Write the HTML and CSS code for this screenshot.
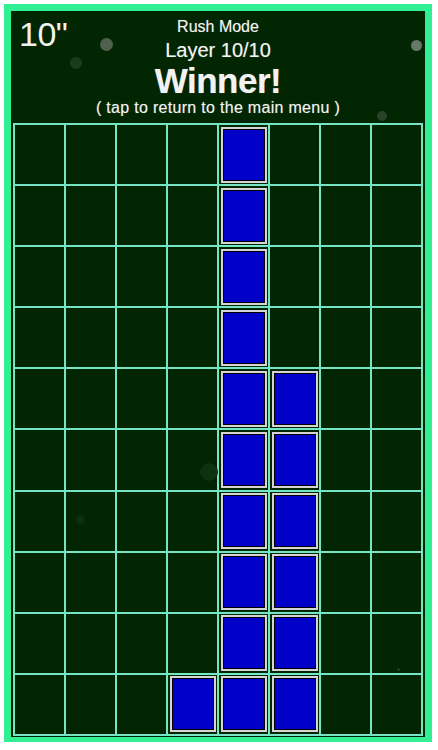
FILE: index.html
```html
<!DOCTYPE html>
<html>
<head>
<meta charset="utf-8">
<link rel="stylesheet" href="styles.css">
</head>
<body>
<div class="frame">
  <div class="timer">10"</div>
  <header class="header">
    <div class="mode">Rush Mode</div>
    <div class="layer">Layer 10/10</div>
    <div class="winner">Winner!</div>
    <div class="hint">( tap to return to the main menu )</div>
  </header>
  <div class="board" id="board"></div>
  <span class="dot d1"></span>
  <span class="dot d2"></span>
  <span class="dot d3"></span>
  <span class="dot d4"></span>
  <span class="dot d5"></span>
  <span class="dot d6"></span>
  <span class="dot d7"></span>
</div>
<script>
  var filled = {};
  for (var r = 0; r < 10; r++) filled[r + ',4'] = 1;
  for (var r2 = 4; r2 < 10; r2++) filled[r2 + ',5'] = 1;
  filled['9,3'] = 1;
  var board = document.getElementById('board');
  for (var r = 0; r < 10; r++) {
    for (var c = 0; c < 8; c++) {
      var cell = document.createElement('div');
      cell.className = 'cell';
      if (filled[r + ',' + c]) {
        var b = document.createElement('div');
        b.className = 'block';
        cell.appendChild(b);
      }
      board.appendChild(cell);
    }
  }
</script>
</body>
</html>
```

FILE: styles.css
```css
html, body {
  margin: 0;
  padding: 0;
  background: #ffffff;
}

body {
  padding: 4px 0 0 4px;
  font-family: "Liberation Sans", Arial, sans-serif;
}

.frame {
  position: relative;
  box-sizing: border-box;
  width: 428px;
  height: 738px;
  border: 7px solid #30f093;
  border-bottom-width: 5px;
  background: #012601;
  display: flex;
  flex-direction: column;
  align-items: center;
}

.timer {
  position: absolute;
  left: 8px;
  top: 3px;
  font-size: 34px;
  line-height: 40px;
  color: #f2f2f2;
  letter-spacing: -0.5px;
}

.header {
  height: 112px;
  box-sizing: border-box;
  padding-top: 5px;
  display: flex;
  flex-direction: column;
  align-items: center;
  color: #f2f2f2;
  text-shadow: 0 0 1px rgba(255,255,255,0.4);
  width: 100%;
}

.mode {
  font-size: 16px;
  line-height: 21px;
}

.layer {
  font-size: 20px;
  line-height: 26px;
}

.winner {
  font-size: 35px;
  line-height: 36px;
  font-weight: bold;
  letter-spacing: -0.5px;
}

.hint {
  font-size: 16px;
  line-height: 18px;
  letter-spacing: 0.3px;
}

.board {
  width: 410px;
  height: 613px;
  box-sizing: border-box;
  padding: 2px;
  gap: 2px;
  background: #74e6c6;
  display: grid;
  grid-template-columns: repeat(8, 1fr);
  grid-template-rows: repeat(10, 1fr);
}

.cell {
  background: #012601;
  padding: 1.5px;
  display: flex;
}

.block {
  flex: 1;
  background: #0000c8;
  border: 2px solid #d4d4d4;
  box-shadow: inset 0 0 0 1px #000000;
}

.dot {
  position: absolute;
  border-radius: 50%;
}

.d1 { left: 89px; top: 27px; width: 13px; height: 13px; background: #4f604f; }
.d2 { left: 59px; top: 46px; width: 12px; height: 12px; background: #1c3a1c; }
.d3 { left: 400px; top: 29px; width: 11px; height: 11px; background: #687868; }
.d4 { left: 366px; top: 100px; width: 10px; height: 10px; background: #2a412a; }
.d5 { left: 189px; top: 452px; width: 18px; height: 18px; background: #0d320f; }
.d6 { left: 65px; top: 504px; width: 9px; height: 9px; background: #0c300e; }
.d7 { left: 386px; top: 657px; width: 3px; height: 3px; background: #1e421e; }
```
